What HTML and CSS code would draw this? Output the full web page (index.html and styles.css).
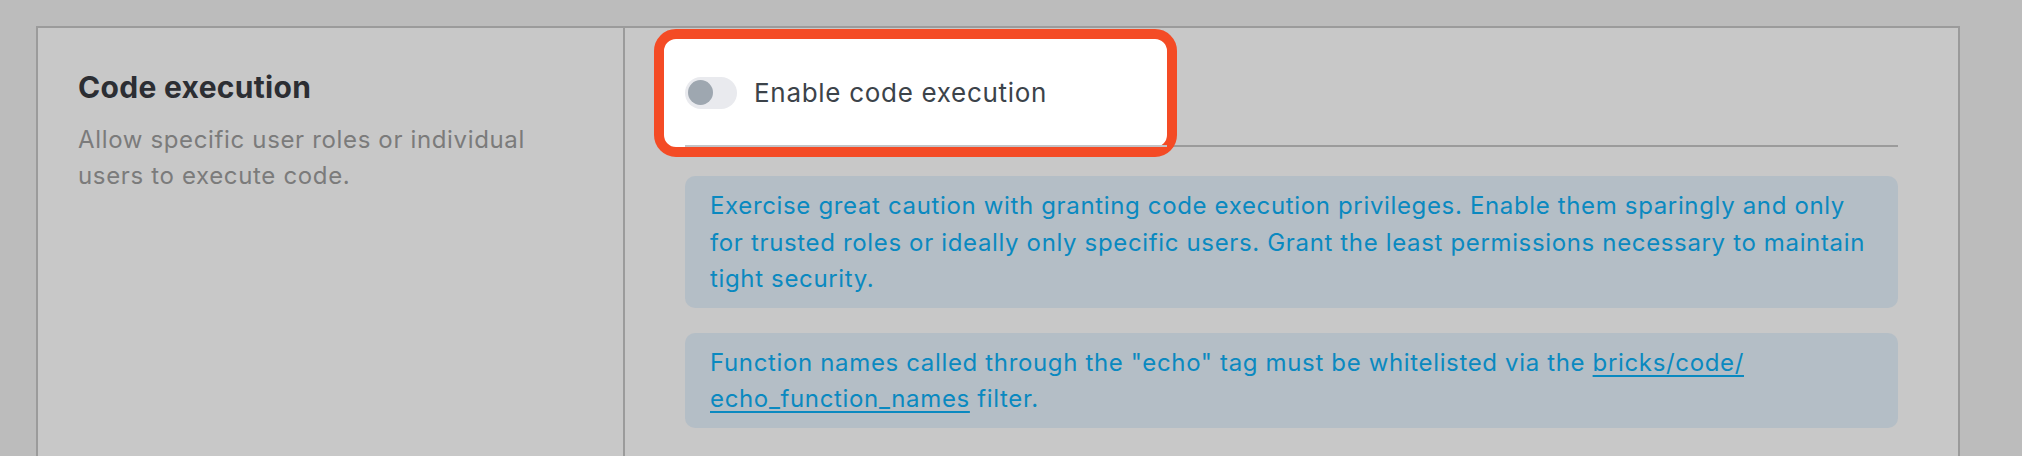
FILE: index.html
```html
<!DOCTYPE html>
<html>
<head>
    <title>Code execution settings</title>
    <link rel="stylesheet" href="styles.css">
</head>
<body>
    <div class="settings-panel">
        <div class="setting-info">
            <h3 class="setting-title">Code execution</h3>
            <p class="setting-desc">Allow specific user roles or individual users to execute code.</p>
        </div>

        <div class="setting-fields">
            <div class="toggle-row">
                <!-- highlight drawn round the toggle -->
                <span class="spotlight"></span>
                <label class="toggle" for="executeCode">
                    <input type="checkbox" id="executeCode">
                    <span class="toggle-track"><span class="toggle-knob"></span></span>
                    <span class="toggle-label">Enable code execution</span>
                </label>
            </div>

            <div class="notice">
                Exercise great caution with granting code execution privileges. Enable them sparingly and only for trusted roles or ideally only specific users. Grant the least permissions necessary to maintain tight security.
            </div>

            <div class="notice">
                Function names called through the "echo" tag must be whitelisted via the <a href="#">bricks/code/<wbr>echo_function_names</a> filter.
            </div>
        </div>
    </div>
</body>
</html>
```

FILE: styles.css
```css
body {
    margin: 0;
    padding: 26px 62px 0 36px;
    background-color: #bcbcbc;
    font-family: Inter, "Noto Sans", sans-serif;
    overflow: hidden;
}

.settings-panel {
    display: grid;
    grid-template-columns: 587px 1fr;
    min-height: 520px;
    background-color: #c8c8c8;
    border: 2px solid #9b9b9b;
}

.setting-info {
    padding: 40px 40px 0 40px;
    border-right: 2px solid #9b9b9b;
}

.setting-title {
    margin: 0;
    font-size: 30px;
    line-height: 39px;
    font-weight: 700;
    letter-spacing: 0.3px;
    color: #2c2e33;
}

.setting-desc {
    max-width: 470px;
    margin: 15px 0 0;
    font-size: 24px;
    line-height: 36px;
    letter-spacing: 0.65px;
    color: #7b7b7b;
}

.setting-fields {
    padding: 12px 60px 0 60px;
}

.toggle-row {
    position: relative;
    display: flex;
    align-items: center;
    height: 105px;
    border-bottom: 2px solid #9b9b9b;
    margin-bottom: 29px;
}

.spotlight {
    position: absolute;
    left: -31px;
    top: -11px;
    width: 503px;
    height: 108px;
    background-color: #fff;
    border: 10px solid #f44b25;
    border-radius: 22px;
}

.spotlight::after {
    content: "";
    position: absolute;
    left: 21px;
    right: 0;
    bottom: 0;
    height: 2px;
    background-color: #c3c4c7;
}

.toggle {
    position: relative;
    display: flex;
    align-items: center;
    gap: 17px;
    cursor: pointer;
}

.toggle input {
    display: none;
}

.toggle-track {
    display: flex;
    align-items: center;
    width: 52px;
    height: 32px;
    padding: 0 3px;
    box-sizing: border-box;
    border-radius: 16px;
    background-color: #e9eaee;
}

.toggle-knob {
    width: 25px;
    height: 25px;
    border-radius: 50%;
    background-color: #9ea7b0;
}

.toggle-label {
    font-size: 26px;
    line-height: 32px;
    letter-spacing: 0.7px;
    color: #3c434a;
}

.notice {
    margin-bottom: 25px;
    padding: 12px 25px 10px;
    border-radius: 10px;
    background-color: #b4bec6;
    font-size: 24px;
    line-height: 36.5px;
    letter-spacing: 0.65px;
    color: #0a89c0;
}

.notice a {
    color: #0a89c0;
    text-decoration: underline;
    text-underline-offset: 4px;
}
```
